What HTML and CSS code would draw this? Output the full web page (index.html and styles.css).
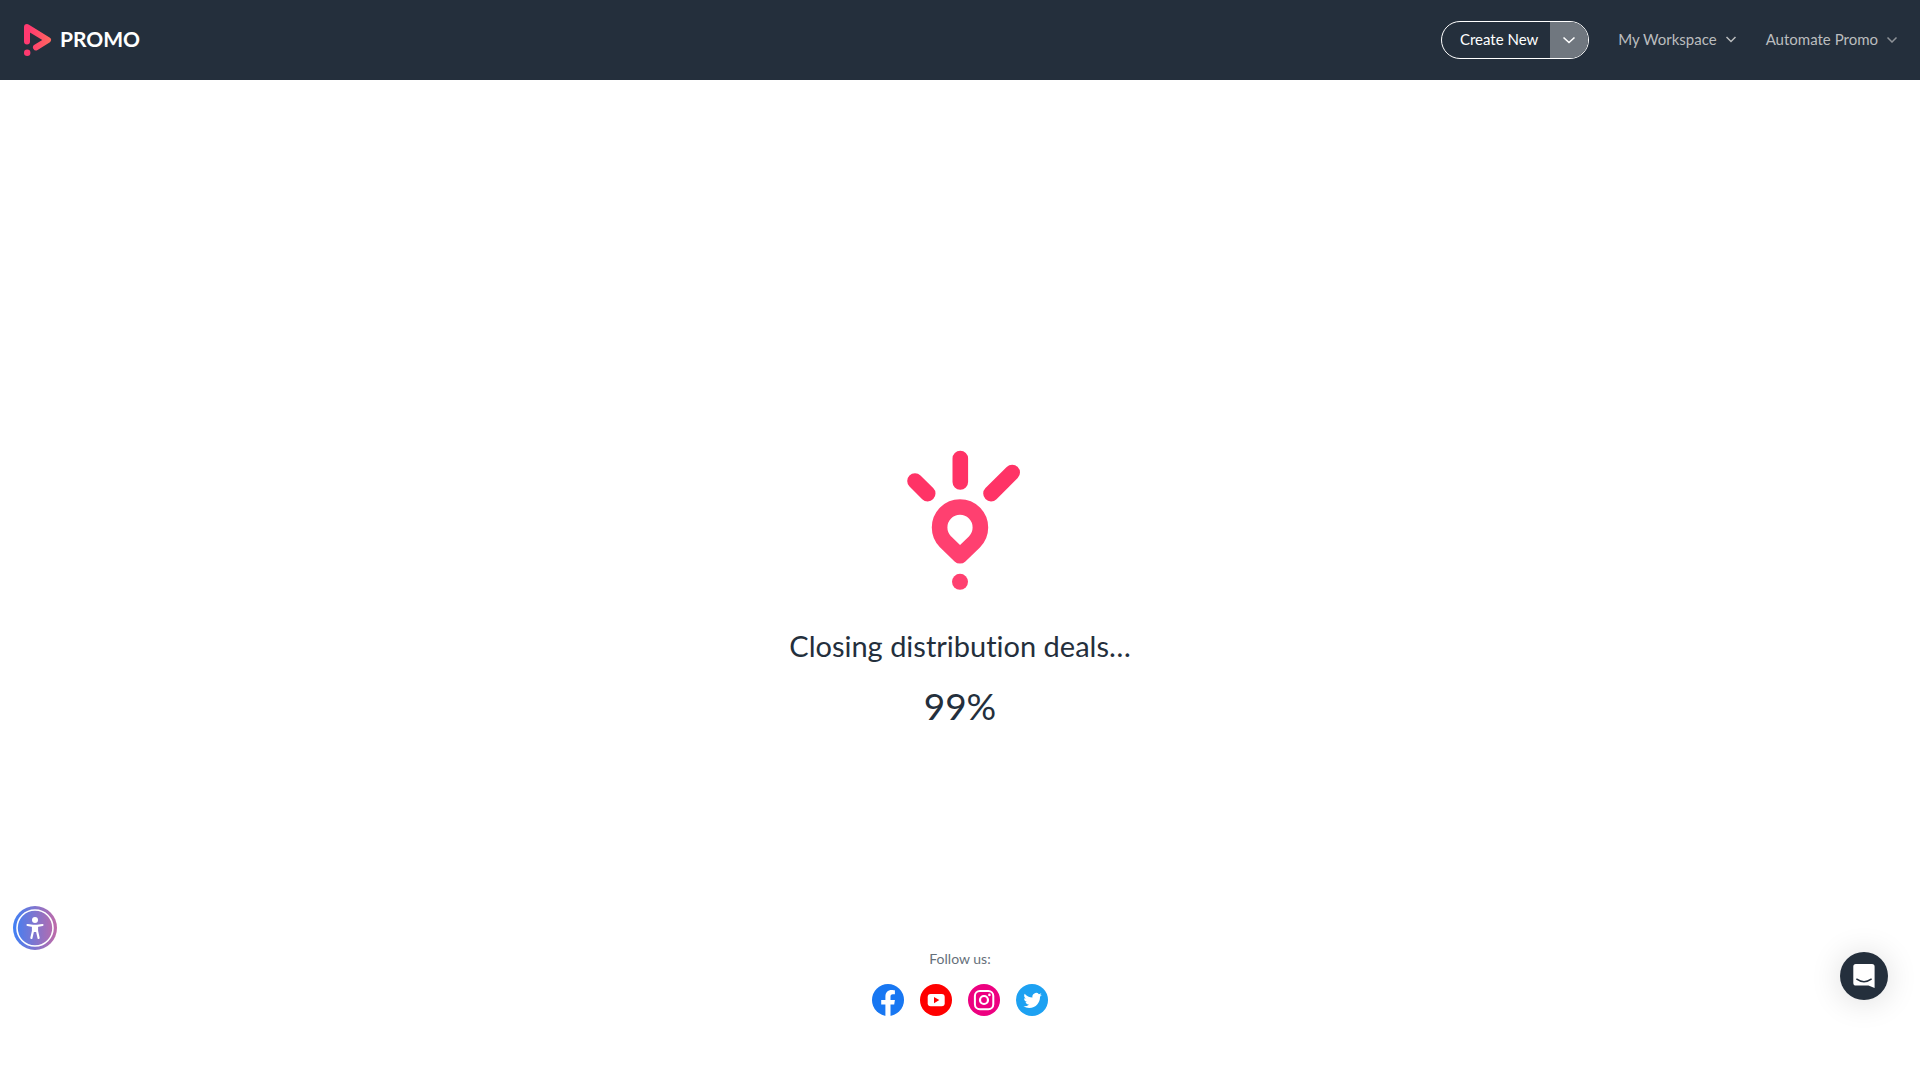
FILE: index.html
```html
<!DOCTYPE html>
<html lang="en">
<head>
<meta charset="UTF-8">
<meta name="viewport" content="width=device-width, initial-scale=1.0">
<title>Promo</title>
<link rel="stylesheet" href="styles.css">
</head>
<body>

<header class="header">
  <a href="#" class="logo">
    <svg width="28" height="32" viewBox="0 0 28 32" aria-hidden="true">
      <defs>
        <linearGradient id="logoGradient" gradientUnits="userSpaceOnUse" x1="0" y1="0" x2="28" y2="0">
          <stop offset="0.2" stop-color="#ff3a70"/>
          <stop offset="1" stop-color="#ff6b5e"/>
        </linearGradient>
      </defs>
      <path d="M3 17.5V3.1L24 16L12 23.4" fill="none" stroke="url(#logoGradient)" stroke-width="6" stroke-linecap="round" stroke-linejoin="round"/>
      <circle cx="3.2" cy="28.8" r="3.2" fill="#ff3a70"/>
    </svg>
    <span>PROMO</span>
  </a>
  <nav class="nav">
    <div class="create">
      <button class="create-main">Create New</button>
      <button class="create-toggle" aria-label="More create options">
        <svg width="14" height="10" viewBox="0 0 14 10"><path d="M1.5 2.5L7 7.5L12.5 2.5" fill="none" stroke="currentColor" stroke-width="1.6"/></svg>
      </button>
    </div>
    <button class="nav-item">My Workspace
      <svg width="12" height="8" viewBox="0 0 12 8"><path d="M1.5 2L6 6.5L10.5 2" fill="none" stroke="currentColor" stroke-width="1.5"/></svg>
    </button>
    <button class="nav-item">Automate Promo
      <svg class="dim" width="12" height="8" viewBox="0 0 12 8"><path d="M1.5 2.5L6 7L10.5 2.5" fill="none" stroke="currentColor" stroke-width="1.5"/></svg>
    </button>
  </nav>
</header>

<main class="loader">
  <svg class="loader-icon" width="150" height="160" viewBox="0 0 150 160" aria-hidden="true">
    <g fill="none" stroke-width="15.6" stroke-linecap="round">
      <path d="M75.3 18.6V42M30 41L42.7 53.6M127.2 32.5L106 53.6" stroke="#ff3366"/>
      <path d="M60.6 101.9A20.4 20.4 0 1 1 89.4 101.9L75 115.8Z" stroke="#ff4070" stroke-linejoin="round"/>
    </g>
    <circle cx="75" cy="141.8" r="8" fill="#ff4070"/>
  </svg>
  <h1 class="loader-text">Closing distribution deals…</h1>
  <p class="loader-percent">99%</p>
</main>

<footer class="footer">
  <p>Follow us:</p>
  <div class="social">
    <a href="#" aria-label="Facebook">
      <svg width="32" height="32" viewBox="0 0 32 32">
        <circle cx="16" cy="16" r="16" fill="#1877f2"/>
        <path d="M13.4 32V20.6H9.2V16H13.4V12.6C13.4 8.4 15.8 6 19.7 6C21.2 6 22.9 6.3 22.9 6.3V10.3H20.9C19 10.3 18.5 11.4 18.5 12.7V16H22.9L22.2 20.6H18.5V32Z" fill="#fff"/>
      </svg>
    </a>
    <a href="#" aria-label="YouTube">
      <svg width="32" height="32" viewBox="0 0 32 32">
        <circle cx="16" cy="16" r="16" fill="#f00"/>
        <rect x="7.7" y="10" width="17" height="12.3" rx="3" fill="#fff"/>
        <path d="M14 13V19.2L19.3 16.1Z" fill="#f00"/>
      </svg>
    </a>
    <a href="#" aria-label="Instagram">
      <svg width="32" height="32" viewBox="0 0 32 32">
        <circle cx="16" cy="16" r="16" fill="#ed0080"/>
        <rect x="6.9" y="6.9" width="18.4" height="18.4" rx="5" fill="none" stroke="#fff" stroke-width="2"/>
        <circle cx="16" cy="16" r="4" fill="none" stroke="#fff" stroke-width="2.2"/>
        <circle cx="21.4" cy="10.9" r="1.3" fill="#fff"/>
      </svg>
    </a>
    <a href="#" aria-label="Twitter">
      <svg width="32" height="32" viewBox="0 0 32 32">
        <circle cx="16" cy="16" r="16" fill="#1da1f2"/>
        <path transform="translate(7.4 7.2) scale(0.77)" fill="#fff" d="M23.953 4.57a10 10 0 01-2.825.775 4.958 4.958 0 002.163-2.723c-.951.555-2.005.959-3.127 1.184a4.92 4.92 0 00-8.384 4.482C7.69 8.095 4.067 6.13 1.64 3.162a4.822 4.822 0 00-.666 2.475c0 1.71.87 3.213 2.188 4.096a4.904 4.904 0 01-2.228-.616v.06a4.923 4.923 0 003.946 4.827 4.996 4.996 0 01-2.212.085 4.936 4.936 0 004.604 3.417 9.867 9.867 0 01-6.102 2.105c-.39 0-.779-.023-1.17-.067a13.995 13.995 0 007.557 2.209c9.053 0 13.998-7.496 13.998-13.985 0-.21 0-.42-.015-.63A9.935 9.935 0 0024 4.59z"/>
      </svg>
    </a>
  </div>
</footer>

<button class="accessibility" aria-label="Accessibility menu">
  <svg width="44" height="44" viewBox="0 0 44 44">
    <circle cx="22" cy="22" r="18" fill="none" stroke="#fff" stroke-width="1.6"/>
    <circle cx="22" cy="14" r="3" fill="#fff"/>
    <path d="M14.5 19L20 19.8H24L29.5 19" fill="none" stroke="#fff" stroke-width="2.2" stroke-linecap="round" stroke-linejoin="round"/>
    <path d="M20 20V25L18.4 32M24 20V25L25.6 32" fill="none" stroke="#fff" stroke-width="2.2" stroke-linecap="round"/>
    <path d="M19 19.5H25V26H19Z" fill="#fff"/>
  </svg>
</button>

<button class="chat" aria-label="Open chat">
  <svg width="24" height="26" viewBox="0 0 24 26">
    <path d="M4 1H20A2.6 2.6 0 0 1 22.6 3.6V25L16.5 22.6H4A2.7 2.7 0 0 1 1.3 20V3.6A2.6 2.6 0 0 1 4 1Z" fill="#fff"/>
    <path d="M4.8 16.2Q12 21.4 19.2 16.2" fill="none" stroke="#242f3c" stroke-width="1.5" stroke-linecap="round"/>
  </svg>
</button>

</body>
</html>
```
FILE: styles.css
```css
* {
  box-sizing: border-box;
}
body {
  font-family: Lato, "Liberation Sans", sans-serif;
  font-variant-ligatures: none;
  margin: 0;
  min-height: 100vh;
  display: flex;
  flex-direction: column;
  background-color: #fff;
  color: #242f3c;
}
button {
  font: inherit;
  color: inherit;
  background: none;
  border: none;
  padding: 0;
  cursor: pointer;
}
svg {
  display: block;
}
.header {
  height: 80px;
  padding: 0 22px 0 24px;
  display: flex;
  justify-content: space-between;
  align-items: center;
  background-color: #242f3c;
}
.logo {
  display: flex;
  align-items: center;
  gap: 8px;
  color: #fff;
  font-size: 21px;
  font-weight: 700;
  text-decoration: none;
}
.logo span {
  padding-bottom: 3px;
}
.nav {
  display: flex;
  align-items: center;
  gap: 29px;
  font-size: 15px;
}
.create {
  display: flex;
  height: 38px;
  border: 1px solid #fff;
  border-radius: 20px;
  overflow: hidden;
  color: #fff;
}
.create-main {
  padding: 0 12px 3px 18px;
}
.create-toggle {
  width: 38px;
  display: flex;
  justify-content: center;
  align-items: center;
  background-color: #70777f;
}
.nav-item {
  display: flex;
  align-items: center;
  gap: 8px;
  padding-bottom: 3px;
  color: #bbbdbf;
}
.nav-item .dim {
  opacity: 0.7;
}
.loader {
  flex: 1;
  display: flex;
  flex-direction: column;
  align-items: center;
  padding-top: 360px;
}
.loader-text {
  margin: 24px 0 0;
  font-size: 29px;
  line-height: 44px;
  font-weight: 400;
}
.loader-percent {
  margin: 16px 0 0;
  font-size: 37px;
  line-height: 44px;
}
.footer {
  display: flex;
  flex-direction: column;
  align-items: center;
  gap: 14px;
  padding-bottom: 64px;
}
.footer p {
  margin: 0;
  font-size: 14px;
  line-height: 22px;
  color: #66707a;
}
.social {
  display: flex;
  gap: 16px;
}
.accessibility {
  position: fixed;
  left: 13px;
  bottom: 130px;
  border-radius: 50%;
  background: linear-gradient(90deg, #3f80f5, #c06aa8);
}
.chat {
  position: fixed;
  right: 32px;
  bottom: 80px;
  width: 48px;
  height: 48px;
  display: flex;
  justify-content: center;
  align-items: center;
  border-radius: 50%;
  background-color: #242f3c;
  box-shadow: 0 2px 32px rgba(0, 0, 0, 0.14);
}
```
